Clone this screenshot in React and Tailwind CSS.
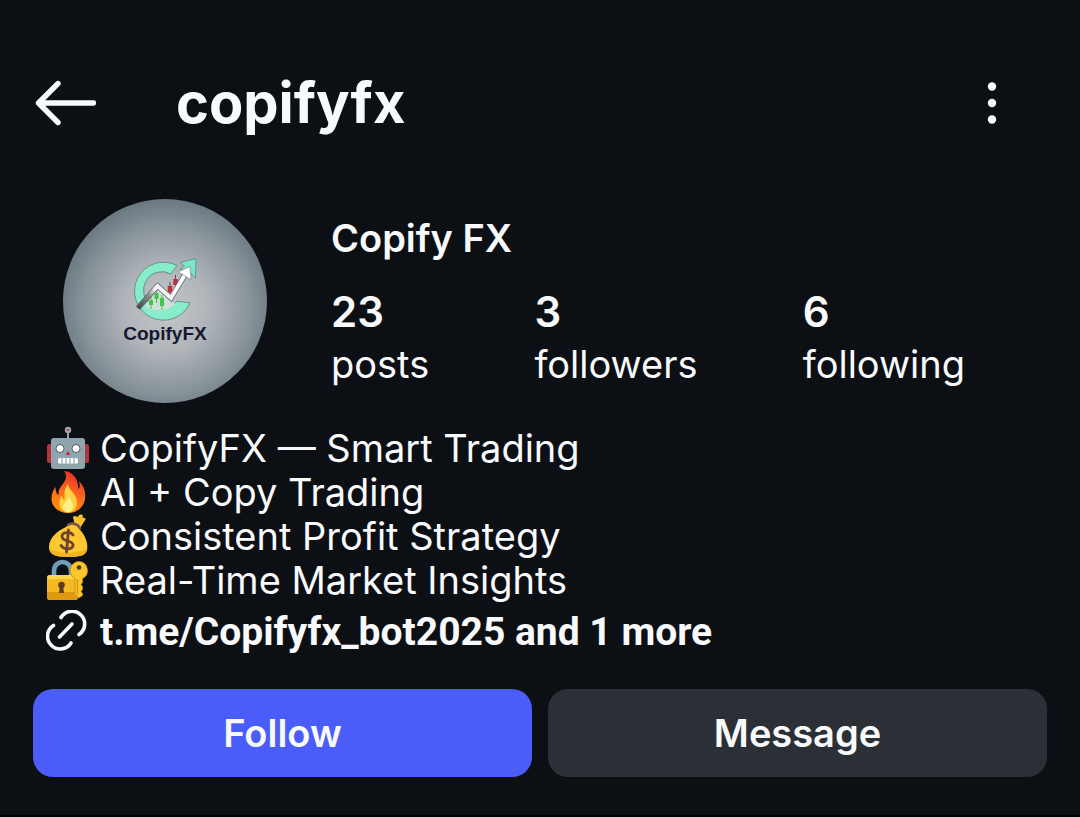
const bio = [
  { icon: RobotIcon, text: "CopifyFX — Smart Trading" },
  { icon: FireIcon, text: "AI + Copy Trading" },
  { icon: MoneyBagIcon, text: "Consistent Profit Strategy" },
  { icon: LockKeyIcon, text: "Real-Time Market Insights" },
];

const stats = [
  { value: 23, label: "posts" },
  { value: 3, label: "followers" },
  { value: 6, label: "following" },
];

function BackIcon() {
  return (
    <svg
      className="w-16 h-12"
      viewBox="0 0 64 48"
      fill="none"
      stroke="currentColor"
      strokeWidth="5.4"
      strokeLinecap="round"
      strokeLinejoin="round"
      aria-hidden="true"
    >
      <path d="M26 4.500 6.500 24 26 43.500M7 24h54.500" />
    </svg>
  );
}

function MoreIcon() {
  return (
    <svg className="w-12 h-12" viewBox="0 0 48 48" fill="currentColor" aria-hidden="true">
      <circle cx="24" cy="7.500" r="4.200" />
      <circle cx="24" cy="24" r="4.200" />
      <circle cx="24" cy="40.500" r="4.200" />
    </svg>
  );
}

function RobotIcon() {
  return (
    <svg className="size-11 shrink-0" viewBox="0 0 44 44" role="img" aria-label="Robot">
      <path d="M22 13V4" stroke="#90a4ae" strokeWidth="2" />
      <circle cx="22" cy="4" r="3.200" fill="#9aa8b0" />
      <circle cx="22" cy="4" r="1.300" fill="#c2475a" />
      <rect x="1" y="18" width="8" height="19" rx="2.500" fill="#b5343c" />
      <rect x="35" y="18" width="8" height="19" rx="2.500" fill="#b5343c" />
      <rect x="5" y="12" width="34" height="31" rx="3" fill="#90a4ae" />
      <circle cx="14" cy="22.500" r="4" fill="#fff" stroke="#4e5a60" strokeWidth="1" />
      <circle cx="30" cy="22.500" r="4" fill="#fff" stroke="#4e5a60" strokeWidth="1" />
      <path d="m22 25 2.300 4h-4.600Z" fill="#c62828" />
      <rect x="12" y="32" width="20" height="5.500" rx="1.500" fill="#fff" />
      <path d="M16 32v5.500M20 32v5.500M24 32v5.500M28 32v5.500" stroke="#78909c" strokeWidth="1" />
    </svg>
  );
}

function FireIcon() {
  return (
    <svg className="size-11 shrink-0" viewBox="0 0 44 44" role="img" aria-label="Fire">
      <defs>
        <linearGradient id="flame" x1="0" y1="1" x2="0.300" y2="0">
          <stop offset="0" stopColor="#ff9800" />
          <stop offset="0.550" stopColor="#ff6d1f" />
          <stop offset="1" stopColor="#e53924" />
        </linearGradient>
      </defs>
      <path
        d="M18 1c9 1 15 8 14 18 2-1 2-4 1-8 5 5 7 11 6 18-1 8-8 14-17 14S5.500 37 5.500 29c0-5 1.500-9 4-12 0 4 1 7 3 8 0-6 2-8 5-12 3-4 3.500-8 .5-12Z"
        fill="url(#flame)"
      />
      <path
        d="M22 14c0 6 9 9 9 19 0 6-4 9.500-9 9.500S13.500 39 13.500 33c0-3 1-6 2.500-8 .2 3 1 4.500 2.500 5 0-6-.5-11 3.500-16Z"
        fill="#ffd23f"
      />
      <path d="M23 25c0 5 4 6 4 11 0 4-2 6-5 6s-5-2-5-5c0-4 5-6 6-12Z" fill="#fff08a" />
    </svg>
  );
}

function MoneyBagIcon() {
  return (
    <svg className="size-11 shrink-0" viewBox="0 0 44 44" role="img" aria-label="Money bag">
      <path d="M29 12 27 3c2-2 4 0 5 0 1-3 4-3 5-1l-.500 2c3-1 4 1 2 3l-5 8Z" fill="#f9c22e" />
      <path
        d="M20 13c3-3 7-3 10-1 7 5 13 16 11 24-1 5-6 7-19 7S3 40 3 33c0-9 8-16 17-20Z"
        fill="#fdc92e"
      />
      <path d="M3 33c3 7 31 8 38 1-1 7-5 9-19 9S3 40 3 33Z" fill="#f3b21f" />
      <path d="M22 11c4-3 10-1 12 3" fill="none" stroke="#795548" strokeWidth="2.600" strokeLinecap="round" />
      <path
        d="M27 21c-3-4-11-3-11 1.500 0 5.500 11 3.500 11 8.500 0 5-9 5-12 .5M22.500 16l-2 22"
        fill="none"
        stroke="#6d4030"
        strokeWidth="2.800"
        strokeLinecap="round"
      />
    </svg>
  );
}

function LockKeyIcon() {
  return (
    <svg className="size-11 shrink-0" viewBox="0 0 44 44" role="img" aria-label="Lock with key">
      <path d="M8 21v-8C8 1 25 1 25 13v8" fill="none" stroke="#6f9db5" strokeWidth="4.600" />
      <rect x="1" y="17" width="31" height="25" rx="3" fill="#f5b921" />
      <path d="M1 34h31v5a3 3 0 0 1-3 3H4a3 3 0 0 1-3-3Z" fill="#dd9a10" />
      <path d="M1 20a3 3 0 0 1 3-3h25a3 3 0 0 1 3 3v1H1Z" fill="#ffd54a" />
      <circle cx="15.500" cy="27" r="3.300" fill="#5d3c25" />
      <path d="M14 27h3l1 8h-5Z" fill="#5d3c25" />
      <path
        d="M33 3.500a9 9 0 0 1 3.500 17v4l-1.500 2 1.500 2v3l-1.500 2 1.500 2v2L33 40l-4-3V20.500a9 9 0 0 1 4-17Z"
        fill="#fcc72d"
        stroke="#c98a12"
        strokeWidth="0.800"
      />
      <path d="M31.500 21v16" stroke="#d8990f" strokeWidth="1.300" />
      <circle cx="33" cy="9.500" r="2.300" fill="#4b3321" />
    </svg>
  );
}

function LinkIcon() {
  return (
    <svg
      className="size-11 shrink-0"
      viewBox="0 0 44 44"
      fill="none"
      stroke="currentColor"
      strokeWidth="3.600"
      strokeLinecap="round"
      aria-hidden="true"
    >
      <path d="M15 7.500A12.700 12.700 0 1 1 33 24.500" />
      <path d="M7.500 15.500A12.700 12.700 0 1 0 25 33" />
      <path d="M13.500 27 26 14" />
    </svg>
  );
}

function Avatar() {
  return (
    <svg
      className="size-[204px] shrink-0 rounded-full"
      viewBox="0 0 204 204"
      role="img"
      aria-label="CopifyFX profile photo"
    >
      <defs>
        <radialGradient id="backdrop" cx="0.510" cy="0.540" r="0.590">
          <stop offset="0" stopColor="#c3c7cb" />
          <stop offset="0.350" stopColor="#b0b5ba" />
          <stop offset="0.700" stopColor="#879299" />
          <stop offset="1" stopColor="#5e6d75" />
        </radialGradient>
        <linearGradient id="trend" x1="0" y1="1" x2="1" y2="0">
          <stop offset="0" stopColor="#3f4847" />
          <stop offset="0.300" stopColor="#8d9293" />
          <stop offset="0.450" stopColor="#f4f4f6" />
          <stop offset="1" stopColor="#ffffff" />
        </linearGradient>
      </defs>
      <rect width="204" height="204" fill="url(#backdrop)" />
      <path
        d="M114 66.500A29 29 0 1 0 127 104l-13-2a18.500 18.500 0 1 1-6-27Z"
        fill="#86ecc9"
        stroke="#55837a"
        strokeWidth="0.800"
      />
      <path d="m117 63.500 16-4-.500 19.500-5-5-10-4 4-3Z" fill="#7be5c4" stroke="#4d9184" strokeWidth="0.800" />
      <path d="m82 107 12-18 13 13 6 3-10 6H88Z" fill="#cddfd6" />
      <path d="M88 98v12M93.500 92v12M99 96v15" stroke="#55b957" strokeWidth="1" />
      <path d="M88 101v5M93.500 94v6M99 99v8" stroke="#43c549" strokeWidth="4" />
      <path d="M107 83v13M112.500 76v14" stroke="#8d3742" strokeWidth="1" />
      <path d="M107 87v6M112.500 80v6" stroke="#c12c3d" strokeWidth="4.500" />
      <path d="m75 109 19.500-22L108 99l15-25" fill="none" stroke="#59666a" strokeWidth="5.400" />
      <path d="m75 109 19.500-22L108 99l15-25" fill="none" stroke="url(#trend)" strokeWidth="4" />
      <path d="m115 73 12-5.500 1 13.500-4-3-5-3Z" fill="#fff" stroke="#69797b" strokeWidth="0.600" />
      <text
        x="102"
        y="141"
        textAnchor="middle"
        className="font-['Liberation_Sans',sans-serif] text-[19px] font-bold"
        fill="#15182f"
      >
        CopifyFX
      </text>
    </svg>
  );
}

function Header() {
  return (
    <header className="flex items-center px-8 pt-[65px]">
      <button type="button" aria-label="Back" className="cursor-pointer">
        <BackIcon />
      </button>
      <h1 className="ml-20 text-[56px] leading-[76px] font-bold">copifyfx</h1>
      <button type="button" aria-label="More options" className="ml-auto mr-8 cursor-pointer">
        <MoreIcon />
      </button>
    </header>
  );
}

function App() {
  return (
    <main className="min-h-screen bg-[#0c1014] border-b-2 border-black text-[#f8f9fb] font-['Inter',sans-serif]">
      <Header />

      {/* Profile summary */}
      <section className="flex gap-16 pl-[63px] pr-[115px] mt-[58px]">
        <Avatar />
        <div className="flex-1 pt-[15px]">
          <h2 className="text-[38px] leading-[48px] font-semibold">Copify FX</h2>
          <dl className="flex justify-between mt-6">
            {stats.map((stat) => (
              <div key={stat.label} className="flex flex-col-reverse">
                <dt className="text-[38px] leading-[52px]">{stat.label}</dt>
                <dd className="text-[42px] leading-[52px] font-semibold">{stat.value}</dd>
              </div>
            ))}
          </dl>
        </div>
      </section>

      {/* Bio */}
      <section className="px-[46px] mt-[23px]">
        <ul>
          {bio.map(({ icon: Icon, text }) => (
            <li key={text} className="flex items-center gap-2.5 text-[38px] leading-[42px]">
              <Icon />
              <span>{text}</span>
            </li>
          ))}
        </ul>
        <a
          href="https://t.me/Copifyfx_bot2025"
          className="flex items-center gap-2.5 mt-1.5 text-[39px] leading-[48px] font-bold font-['Roboto',sans-serif]"
        >
          <LinkIcon />
          <span>t.me/Copifyfx_bot2025 and 1 more</span>
        </a>
      </section>

      {/* Actions */}
      <div className="grid grid-cols-2 gap-4 px-[33px] pt-[33px] pb-9 text-[38px] leading-[88px] font-semibold">
        <button type="button" className="rounded-[20px] bg-[#4a5df9] cursor-pointer">
          Follow
        </button>
        <button type="button" className="rounded-[20px] bg-[#2b3036] cursor-pointer">
          Message
        </button>
      </div>
    </main>
  );
}

export default App;
